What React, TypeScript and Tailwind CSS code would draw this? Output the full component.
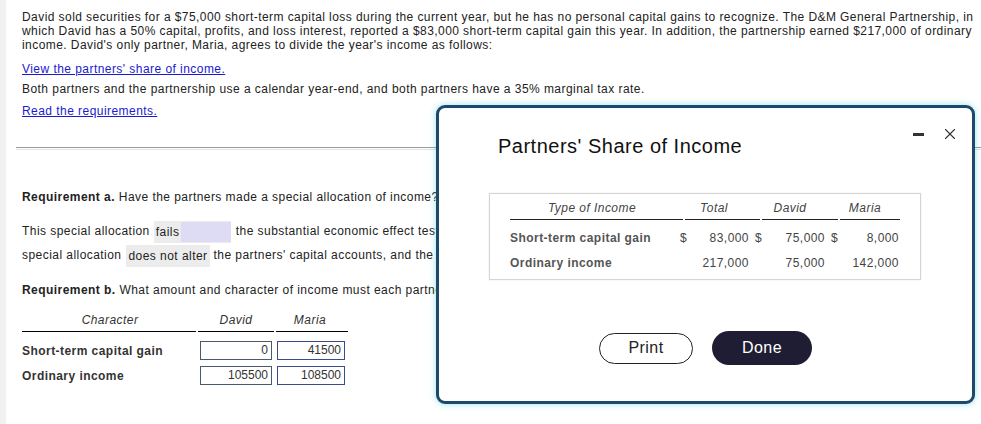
import { X } from "lucide-react"

const font = { fontFamily: '"Liberation Sans", Arial, sans-serif' }

function Dropdown({ value, className }: { value: string; className: string }) {
  return (
    <span className={`inline-flex items-center h-[22px] align-middle bg-[#ececec] mx-[4px] ${className}`}>
      <span className="px-[3px]">{value}</span>
    </span>
  )
}

export default function App() {
  const shares = [
    { type: "Short-term capital gain", total: "83,000", david: "75,000", maria: "8,000", sign: true },
    { type: "Ordinary income", total: "217,000", david: "75,000", maria: "142,000", sign: false },
  ]

  return (
    <div className="relative w-[981px] h-[424px] overflow-hidden bg-white text-[12px] tracking-[0.45px] text-[#222]" style={font}>
      {/* thin grey strip at left edge */}
      <div className="absolute left-0 top-0 h-full w-[6px] bg-[#f1f1f1]"></div>

      <div className="pl-[22px] pr-[1px] pt-[10px]">
        <p className="leading-[14px] tracking-[0.43px]">
          David sold securities for a $75,000 short-term capital loss during the current year, but he has no personal capital gains to recognize. The D&amp;M General Partnership, in which David has a 50% capital, profits, and loss interest, reported a $83,000 short-term capital gain this year. In addition, the partnership earned $217,000 of ordinary income. David's only partner, Maria, agrees to divide the year's income as follows:
        </p>
        <a className="block mt-[10px] leading-[14px] text-[#1a1ad0] underline">View the partners' share of income.</a>
        <p className="mt-[6px] leading-[14px]">Both partners and the partnership use a calendar year-end, and both partners have a 35% marginal tax rate.</p>
        <a className="block mt-[8px] leading-[14px] text-[#1a1ad0] underline">Read the requirements.</a>
      </div>

      <div className="ml-[16px] mt-[29px] h-[3px] border-t border-[#9a9a9a] border-b border-b-[#e2e2e2]"></div>

      {/* requirements, partly covered by the popup */}
      <div className="pl-[22px] pt-[40px] w-[440px] overflow-hidden">
        <div className="leading-[14px] whitespace-nowrap">
          <span className="font-bold">Requirement a.</span> Have the partners made a special allocation of income? If so, does the special allocation have substantial economic effect?
        </div>
        <div className="mt-[15px] leading-[24px] whitespace-nowrap">
          This special allocation
          <span className="inline-flex items-center h-[22px] align-middle w-[77px] bg-[#ececec] ml-[4px] mr-[5px]">
            <span className="px-[2px]">fails</span>
            <span className="flex-1 self-stretch my-[1px] bg-[#dedcf4]"></span>
          </span>
          the substantial economic effect test because the
        </div>
        <div className="leading-[24px] whitespace-nowrap">
          special allocation
          <Dropdown value="does not alter" className="w-[84px]" />
          the partners' capital accounts, and the partners' liquidation rights.
        </div>
        <div className="mt-[16px] leading-[14px] whitespace-nowrap">
          <span className="font-bold">Requirement b.</span> What amount and character of income must each partner recognize?
        </div>

        {/* answer table */}
        <div className="mt-[16px] w-[326px]">
          <div className="flex italic text-[#333] leading-[14px]">
            <div className="w-[176px] text-center">Character</div>
            <div className="w-[76px] text-center">David</div>
            <div className="w-[72px] text-center">Maria</div>
          </div>
          <div className="flex gap-[2px] mt-[4px]">
            <div className="w-[174px] border-t-[1.5px] border-black"></div>
            <div className="w-[76px] border-t-[1.5px] border-black"></div>
            <div className="w-[72px] border-t-[1.5px] border-black"></div>
          </div>
          {[
            ["Short-term capital gain", "0", "41500"],
            ["Ordinary income", "105500", "108500"],
          ].map((row, i) => (
            <div key={i} className={`flex items-center ${i === 0 ? "mt-[8px]" : "mt-[5px]"}`}>
              <div className="w-[178px] font-bold text-[#333] pt-[2px]">{row[0]}</div>
              <div className="w-[72px] h-[19px] border border-[#4a5a6a] text-right pr-[3px] leading-[17px] text-[#333] tracking-normal">{row[1]}</div>
              <div className="w-[68px] h-[19px] ml-[5px] border border-[#3a4a8a] text-right pr-[3px] leading-[17px] text-[#333] tracking-normal">{row[2]}</div>
            </div>
          ))}
        </div>
      </div>

      {/* popup window */}
      <div className="absolute left-[436px] top-[105px] w-[539px] h-[299px] bg-white border-[3px] border-[#1d4a6c] rounded-[9px] shadow-[0_0_7px_rgba(40,190,210,0.45)]">
        <div className="absolute left-[474px] top-[25px] w-[11px] h-[3px] bg-[#333]"></div>
        <X className="absolute left-[502px] top-[17px] w-[18px] h-[18px] text-[#333]" strokeWidth={1.5} />

        <div className="pl-[59px] pt-[26px] text-[20px] leading-[24px] tracking-[0.5px] text-[#111]">Partners' Share of Income</div>

        <div className="ml-[50px] mt-[35px] w-[432px] h-[87px] border border-[#d4d4d4] shadow-[0_0_2px_rgba(0,0,0,0.08)] pl-[20px] pt-[7px] text-[#444]">
          <div className="flex italic leading-[14px]">
            <div className="w-[164px] text-center">Type of Income</div>
            <div className="w-[80px] text-center">Total</div>
            <div className="w-[72px] text-center">David</div>
            <div className="w-[78px] text-center">Maria</div>
          </div>
          <div className="flex gap-[2px] mt-[4px]">
            <div className="w-[173px] border-t border-[#222]"></div>
            <div className="w-[75px] border-t border-[#222]"></div>
            <div className="w-[76px] border-t border-[#222]"></div>
            <div className="w-[60px] border-t border-[#222]"></div>
          </div>
          {shares.map((r, i) => (
            <div key={i} className="flex leading-[14px] mt-[11px]">
              <div className="w-[170px] font-bold text-[#555] whitespace-nowrap">{r.type}</div>
              <div className="w-[8px]">{r.sign ? "$" : ""}</div>
              <div className="w-[61px] text-right">{r.total}</div>
              <div className="w-[8px] ml-[6px]">{r.sign ? "$" : ""}</div>
              <div className="w-[62px] text-right">{r.david}</div>
              <div className="w-[8px] ml-[6px]">{r.sign ? "$" : ""}</div>
              <div className="w-[60px] text-right">{r.maria}</div>
            </div>
          ))}
        </div>

        <div className="flex justify-center items-center gap-[19px] mt-[51px]">
          <button className="w-[94px] h-[31px] rounded-full border-[1.5px] border-[#222] text-[16px] text-[#222]">Print</button>
          <button className="w-[100px] h-[34px] rounded-full bg-[#1f1d33] text-[16px] text-white">Done</button>
        </div>
      </div>
    </div>
  )
}
